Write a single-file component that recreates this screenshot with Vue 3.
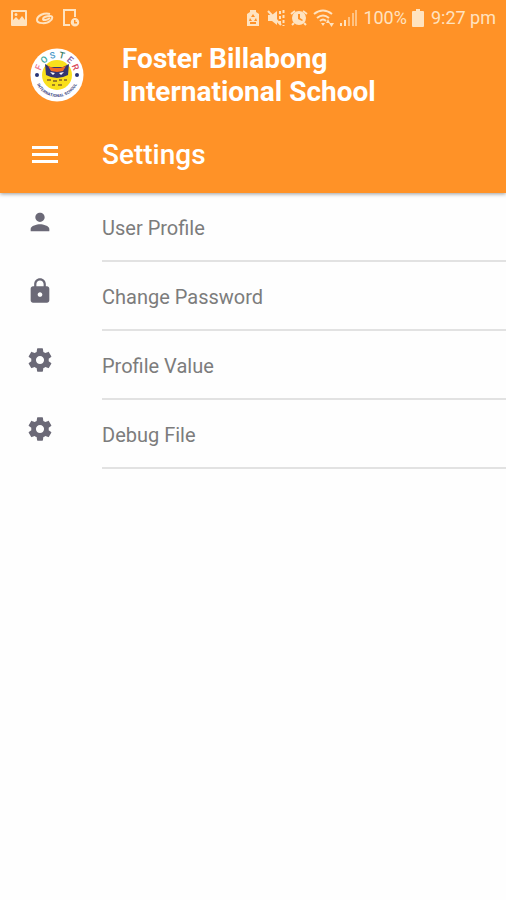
<template>
  <div class="settings-page">
    <header class="app-header">
      <div class="status-bar">
        <div class="status-icons notifications">
          <svg class="status-icon" viewBox="0 0 18 18">
            <path fill-rule="evenodd" d="M2 1h14q1 0 1 1v14q0 1-1 1H2q-1 0-1-1V2q0-1 1-1zm1 2v8l3-3 3 3 3-4 3 4V3zm3 1a1.500 1.500 0 1 0 0 3 1.500 1.500 0 0 0 0-3z" />
          </svg>
          <svg class="status-icon" viewBox="0 0 18 18">
            <path class="stroke" d="M14 5C8 3 1 7 1 11c0 4 10 4 13 1 3-2 3-5 0-5-3 0-7 1-7 3s4 1 7-1" />
          </svg>
          <svg class="status-icon" viewBox="0 0 18 18">
            <path class="stroke" d="M8 16H2V1h11v7" />
            <path fill-rule="evenodd" d="M13 9a4 4 0 1 0 0 8.500 4 4 0 0 0 0-8.500zm-1 2h1.500v2H15v1.500h-3z" />
          </svg>
        </div>
        <div class="status-icons">
          <svg class="status-icon" viewBox="0 0 18 18">
            <path fill-rule="evenodd" d="M6 1h6v2l3 2v12H3V5l3-2zM9 5L7 8h4zM6 9l-1 3h3zm6 0l-2 3h3zm-6 4v2h6v-2z" />
          </svg>
          <svg class="status-icon" viewBox="0 0 18 18">
            <path d="M1 6h4l5-4v14l-5-4H1z" />
            <path class="stroke" d="M1 2l13 14" />
            <path class="stroke dashed" d="M13 2v14M16.500 1v16" />
          </svg>
          <svg class="status-icon" viewBox="0 0 18 18">
            <path fill-rule="evenodd" d="M9 2a7 7 0 1 0 0 14A7 7 0 0 0 9 2zm-1 3h2v4l3 2-1 1-4-2z" />
            <path class="stroke" d="M1 5l4-3M17 5l-4-3M4 14l-2 2M14 14l2 2" />
          </svg>
          <svg class="status-icon wifi" viewBox="0 0 22 18">
            <path class="stroke" d="M1 5q9-7 18 0M4 9q6-5 12 0M7 12q3-3 6 0" />
            <path d="M8 14h4l-2 3zM13 14l2-4 2 4zM16 14h5l-2.500 4z" />
          </svg>
          <svg class="status-icon" viewBox="0 0 18 18">
            <path d="M0 14h2v3H0zM4 11h2v6H4z" />
            <path class="weak" d="M8 8h2v9H8zM12 4h2v13h-2zM15 1h2v16h-2z" />
          </svg>
          <span class="status-text">100%</span>
          <svg class="status-icon battery" viewBox="0 0 12 18">
            <path d="M4 0h4v2h3q1 0 1 1v14q0 1-1 1H1q-1 0-1-1V3q0-1 1-1h3z" />
          </svg>
          <span class="status-text">9:27 pm</span>
        </div>
      </div>

      <div class="brand">
        <svg class="logo" viewBox="0 0 54 54" role="img" aria-label="Foster">
          <defs>
            <path id="logo-arc" d="M6 27A21 21 0 0 0 48 27" />
          </defs>
          <circle cx="27" cy="27" r="26.500" fill="#fff" />
          <circle cx="27" cy="27" r="15" fill="#f9df1c" />
          <path d="M15 16l5 3h13l6-3-1 11q-11 6-22 0z" fill="#34346f" />
          <path d="M18 18l6 2h6l6-2-3 5-6 1-6-1z" fill="#f06a25" />
          <path d="M20 24l5 1-2 2zM34 24l-5 1 2 2z" fill="#fff" />
          <path d="M17 32h4M23 33h4M29 32h3M34 32h3M22 37h3M28 37h4" stroke="#a08024" stroke-width="2" />
          <circle cx="7" cy="27" r="2" fill="#273577" />
          <circle cx="47" cy="27" r="2" fill="#273577" />
          <text
            v-for="item in logoLetters"
            :key="item.id"
            class="logo-letter"
            :fill="item.color"
            :transform="`rotate(${item.angle} 27 27)`"
            x="27"
            y="10"
          >{{ item.letter }}</text>
          <text class="logo-caption">
            <textPath href="#logo-arc" startOffset="50%">INTERNATIONAL SCHOOL</textPath>
          </text>
        </svg>
        <h1 class="school-name">Foster Billabong<br />International School</h1>
      </div>

      <div class="toolbar">
        <button class="menu-button" type="button" aria-label="Menu">
          <svg viewBox="0 0 26 20">
            <path d="M0 1h26v3H0zM0 8h26v3H0zM0 15h26v3H0z" />
          </svg>
        </button>
        <h2 class="page-title">Settings</h2>
      </div>
    </header>

    <nav class="settings-list">
      <a v-for="item in items" :key="item.label" class="settings-item" href="#">
        <svg class="item-icon" viewBox="0 0 24 24">
          <path :d="icons[item.icon]" />
        </svg>
        <span class="item-label">{{ item.label }}</span>
      </a>
    </nav>
  </div>
</template>

<script setup>
const icons = {
  person: 'M12 12c2.210 0 4-1.790 4-4s-1.790-4-4-4-4 1.790-4 4 1.790 4 4 4zm0 2c-2.670 0-8 1.340-8 4v2h16v-2c0-2.660-5.330-4-8-4z',
  lock: 'M18 8h-1V6c0-2.760-2.240-5-5-5S7 3.240 7 6v2H6c-1.100 0-2 .9-2 2v10c0 1.100.9 2 2 2h12c1.100 0 2-.9 2-2V10c0-1.100-.9-2-2-2zm-6 9c-1.100 0-2-.9-2-2s.9-2 2-2 2 .9 2 2-.9 2-2 2zm3.100-9H8.900V6c0-1.710 1.390-3.100 3.100-3.100s3.100 1.390 3.100 3.100v2z',
  gear: 'M19.430 12.980c.04-.32.070-.64.070-.98s-.03-.66-.07-.98l2.110-1.650c.19-.15.24-.42.12-.64l-2-3.460c-.12-.22-.39-.3-.61-.22l-2.490 1c-.52-.4-1.080-.73-1.690-.98l-.38-2.650C14.460 2.180 14.250 2 14 2h-4c-.25 0-.46.18-.49.420l-.38 2.650c-.61.25-1.170.59-1.690.98l-2.490-1c-.23-.09-.49 0-.61.220l-2 3.460c-.13.220-.07.490.12.640l2.110 1.650c-.04.32-.07.650-.07.980s.03.66.070.98l-2.110 1.650c-.19.15-.24.42-.12.640l2 3.460c.12.220.39.300.61.220l2.490-1c.52.4 1.080.73 1.690.98l.38 2.650c.03.240.24.420.49.420h4c.25 0 .46-.18.490-.42l.38-2.650c.61-.25 1.170-.59 1.690-.98l2.490 1c.23.090.49 0 .61-.22l2-3.460c.12-.22.070-.49-.12-.64l-2.110-1.650zM12 15.500c-1.930 0-3.500-1.570-3.500-3.500s1.570-3.500 3.500-3.500 3.500 1.570 3.500 3.500-1.570 3.500-3.500 3.500z'
}

const items = [
  { label: 'User Profile', icon: 'person' },
  { label: 'Change Password', icon: 'lock' },
  { label: 'Profile Value', icon: 'gear' },
  { label: 'Debug File', icon: 'gear' }
]

const logoLetters = [
  { id: 1, letter: 'F', color: '#ef7188', angle: -67 },
  { id: 2, letter: 'O', color: '#38a99b', angle: -40 },
  { id: 3, letter: 'S', color: '#4b9ac9', angle: -13 },
  { id: 4, letter: 'T', color: '#397e65', angle: 14 },
  { id: 5, letter: 'E', color: '#8362a5', angle: 41 },
  { id: 6, letter: 'R', color: '#d94859', angle: 67 }
]
</script>

<style>
body {
  margin: 0;
  background: #fefefe;
}
</style>

<style scoped>
.settings-page {
  font-family: Roboto, 'Liberation Sans', sans-serif;
}

.app-header {
  position: relative;
  background: #ff9227;
  color: #fff;
  box-shadow: 0 1px 4px rgba(0, 0, 0, 0.4);
}

.status-bar {
  display: flex;
  align-items: center;
  justify-content: space-between;
  height: 36px;
  padding: 0 10px;
  color: #ffe3c0;
}

.status-icons {
  display: flex;
  align-items: center;
  gap: 5px;
}

.notifications {
  gap: 8px;
}

.status-icon {
  width: 18px;
  height: 18px;
  fill: currentColor;
}

.status-icon.wifi {
  width: 22px;
}

.status-icon.battery {
  width: 12px;
  margin-right: 2px;
}

.stroke {
  fill: none;
  stroke: currentColor;
  stroke-width: 2;
}

.dashed {
  stroke-dasharray: 3 2;
}

.weak {
  opacity: 0.6;
}

.status-text {
  font-size: 18px;
  line-height: 24px;
}

.brand {
  display: flex;
  align-items: center;
  gap: 38px;
  padding: 6px 30px 0;
}

.logo {
  flex: none;
  width: 54px;
  height: 54px;
  overflow: visible;
}

.logo-letter {
  font-size: 9px;
  font-weight: 500;
  text-anchor: middle;
}

.logo-caption {
  font-size: 4px;
  font-weight: 700;
  fill: #35407d;
  text-anchor: middle;
  dominant-baseline: middle;
}

.school-name {
  margin: 0;
  font-size: 28px;
  font-weight: 700;
  line-height: 33px;
}

.toolbar {
  display: flex;
  align-items: center;
  gap: 44px;
  height: 85px;
  padding: 8px 32px 0;
  box-sizing: border-box;
}

.menu-button {
  width: 26px;
  height: 20px;
  padding: 0;
  border: 0;
  background: none;
  color: inherit;
  cursor: pointer;
}

.menu-button svg {
  display: block;
  fill: currentColor;
}

.page-title {
  margin: 0;
  font-size: 28px;
  font-weight: 500;
  line-height: 33px;
}

.settings-item {
  display: flex;
  gap: 48px;
  height: 69px;
  padding-left: 26px;
  color: #7c7c7c;
  text-decoration: none;
}

.item-icon {
  flex: none;
  width: 28px;
  height: 28px;
  margin-top: 15px;
  fill: #6b6977;
}

.item-label {
  flex: 1;
  border-bottom: 2px solid #e2e2e2;
  font-size: 20px;
  line-height: 70px;
}
</style>
